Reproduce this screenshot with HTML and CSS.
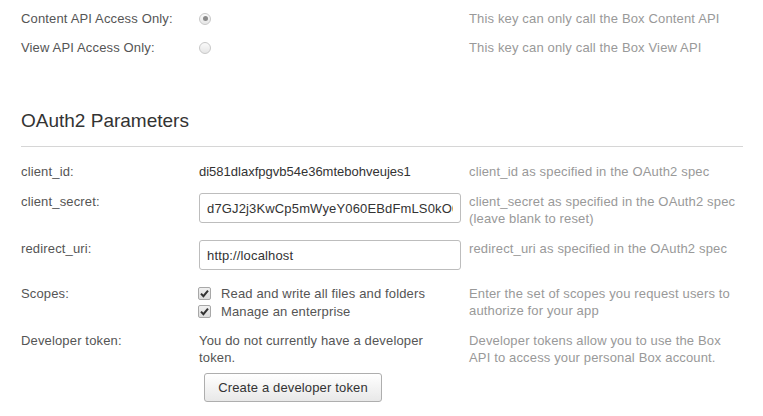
FILE: index.html
```html
<!DOCTYPE html>
<html>
<head>
<meta charset="utf-8">
<link rel="stylesheet" href="styles.css">
</head>
<body>
<div class="page">
  <div class="row row-access">
    <div class="label">Content API Access Only:</div>
    <div class="value"><span class="radio checked"></span></div>
    <div class="desc">This key can only call the Box Content API</div>
  </div>
  <div class="row row-access">
    <div class="label">View API Access Only:</div>
    <div class="value"><span class="radio"></span></div>
    <div class="desc">This key can only call the Box View API</div>
  </div>

  <h2 class="section-title">OAuth2 Parameters</h2>
  <hr class="divider">

  <div class="row">
    <div class="label">client_id:</div>
    <div class="value value-text">di581dlaxfpgvb54e36mtebohveujes1</div>
    <div class="desc">client_id as specified in the OAuth2 spec</div>
  </div>
  <div class="row">
    <div class="label">client_secret:</div>
    <div class="value"><input class="text-input" type="text" value="d7GJ2j3KwCp5mWyeY060EBdFmLS0kO02Zb9"></div>
    <div class="desc">client_secret as specified in the OAuth2 spec (leave blank to reset)</div>
  </div>
  <div class="row row-redirect">
    <div class="label">redirect_uri:</div>
    <div class="value"><input class="text-input" type="text" value="http://localhost"></div>
    <div class="desc">redirect_uri as specified in the OAuth2 spec</div>
  </div>
  <div class="row row-scopes">
    <div class="label">Scopes:</div>
    <div class="value scopes">
      <div class="scope"><span class="checkbox"><svg viewBox="0 0 13 13" width="13" height="13"><path d="M3 6.6 L5.4 9.2 L10 3.6" fill="none" stroke="#333" stroke-width="2"/></svg></span>Read and write all files and folders</div>
      <div class="scope"><span class="checkbox"><svg viewBox="0 0 13 13" width="13" height="13"><path d="M3 6.6 L5.4 9.2 L10 3.6" fill="none" stroke="#333" stroke-width="2"/></svg></span>Manage an enterprise</div>
    </div>
    <div class="desc">Enter the set of scopes you request users to authorize for your app</div>
  </div>
  <div class="row">
    <div class="label">Developer token:</div>
    <div class="value">
      <div class="token-text">You do not currently have a developer token.</div>
      <button class="btn" type="button">Create a developer token</button>
    </div>
    <div class="desc">Developer tokens allow you to use the Box API to access your personal Box account.</div>
  </div>
</div>
</body>
</html>
```

FILE: styles.css
```css
html, body {
  margin: 0;
  padding: 0;
  background: #fff;
}
body {
  font-family: "Liberation Sans", Arial, sans-serif;
  font-size: 13px;
  line-height: 17px;
  letter-spacing: 0.15px;
  color: #555;
}
.page {
  padding: 10px 20px 0 21px;
}
.row {
  display: grid;
  grid-template-columns: 178px 270px 274px;
  margin-bottom: 13px;
}
.row-access {
  margin-bottom: 12px;
}
.row-redirect {
  margin-bottom: 15px;
}
.row-scopes {
  margin-bottom: 12px;
}
.label {
  color: #555;
}
.value {
  color: #555;
}
.value-text {
  color: #333;
  letter-spacing: 0;
}
.desc {
  color: #999;
}
.radio {
  display: block;
  box-sizing: border-box;
  width: 12px;
  height: 12px;
  margin-top: 2.5px;
  border-radius: 50%;
  border: 1px solid #c8c8c8;
  background: linear-gradient(#fafafa, #e6e6e6);
  position: relative;
}
.radio.checked::after {
  content: "";
  position: absolute;
  left: 2.5px;
  top: 2.5px;
  width: 5px;
  height: 5px;
  border-radius: 50%;
  background: #8a8a8a;
}
.section-title {
  margin: 54px 0 0 0;
  font-size: 19px;
  line-height: 21px;
  font-weight: normal;
  letter-spacing: 0;
  color: #333;
}
.divider {
  margin: 15px 0 16px 0;
  border: 0;
  border-top: 1px solid #d6d6d6;
  height: 0;
}
.text-input {
  display: block;
  box-sizing: border-box;
  width: 262px;
  height: 30px;
  margin: 0;
  padding: 0 7px;
  border: 1px solid #bdbdbd;
  border-radius: 3px;
  font-family: "Liberation Sans", Arial, sans-serif;
  font-size: 13px;
  letter-spacing: 0.15px;
  color: #333;
  background: #fff;
  outline: none;
}
.scopes {
  display: flex;
  flex-direction: column;
  gap: 1px;
}
.scope {
  display: flex;
  align-items: center;
  color: #555;
}
.checkbox {
  display: block;
  box-sizing: border-box;
  width: 13px;
  height: 13px;
  margin-left: -1px;
  margin-right: 10px;
  border: 1px solid #a8a8a8;
  border-radius: 2px;
  background: linear-gradient(#f0f0f0, #dcdcdc);
  position: relative;
}
.checkbox svg {
  position: absolute;
  left: -1px;
  top: -1px;
}
.token-text {
  max-width: 250px;
  color: #555;
}
.btn {
  display: block;
  box-sizing: border-box;
  width: 178px;
  height: 29px;
  margin: 7px 0 0 5px;
  padding: 0;
  border: 1px solid #aeaeae;
  border-radius: 3px;
  background: linear-gradient(#ffffff, #e8e8e8);
  font-family: "Liberation Sans", Arial, sans-serif;
  font-size: 13px;
  letter-spacing: 0.15px;
  color: #333;
}
```
